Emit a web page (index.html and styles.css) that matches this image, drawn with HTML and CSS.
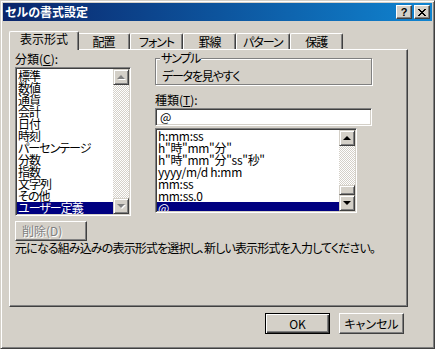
FILE: index.html
```html
<!DOCTYPE html>
<html lang="ja">

<head>
    <meta charset="UTF-8">
    <meta name="viewport" content="width=device-width, initial-scale=1.0">
    <title>セルの書式設定</title>
    <link rel="stylesheet" href="styles.css">
</head>

<body>
    <div class="window">
        <div class="titlebar">
            <span class="title">セルの書式設定</span>
            <div class="caption-btns">
                <button type="button" class="cap-btn help">?</button>
                <button type="button" class="cap-btn close">
                    <svg width="8" height="7" viewBox="0 0 8 7">
                        <path d="M0 0h2v1H0zM6 0h2v1H6zM1 1h2v1H1zM5 1h2v1H5zM2 2h4v1H2zM3 3h2v1H3zM2 4h4v1H2zM1 5h2v1H1zM5 5h2v1H5zM0 6h2v1H0zM6 6h2v1H6z" fill="#000"/>
                    </svg>
                </button>
            </div>
        </div>

        <div class="client">
            <div class="tabs">
                <div class="tab active">表示形式</div>
                <div class="tab">配置</div>
                <div class="tab">フォント</div>
                <div class="tab">罫線</div>
                <div class="tab">パターン</div>
                <div class="tab">保護</div>
            </div>

            <div class="panel">
                <div class="panel-top">
                    <div class="col-left">
                        <div class="label">分類(<u>C</u>):</div>
                        <div class="listbox cat-list">
                            <ul class="items">
                                <li>標準</li>
                                <li>数値</li>
                                <li>通貨</li>
                                <li>会計</li>
                                <li>日付</li>
                                <li>時刻</li>
                                <li>パーセンテージ</li>
                                <li>分数</li>
                                <li>指数</li>
                                <li>文字列</li>
                                <li>その他</li>
                                <li class="selected">ユーザー定義</li>
                            </ul>
                            <div class="scrollbar disabled">
                                <div class="sb-btn"><span class="arrow up"></span></div>
                                <div class="sb-track"></div>
                                <div class="sb-btn"><span class="arrow down"></span></div>
                            </div>
                        </div>
                    </div>

                    <div class="col-right">
                        <div class="group">
                            <span class="group-title">サンプル</span>
                            <div class="sample">データを見やすく</div>
                        </div>
                        <div class="label type-label">種類(<u>T</u>):</div>
                        <div class="textbox">@</div>
                        <div class="listbox type-list">
                            <ul class="items">
                                <li>h:mm:ss</li>
                                <li>h"時"mm"分"</li>
                                <li>h"時"mm"分"ss"秒"</li>
                                <li>yyyy/m/d h:mm</li>
                                <li>mm:ss</li>
                                <li>mm:ss.0</li>
                                <li class="selected">@</li>
                            </ul>
                            <div class="scrollbar">
                                <div class="sb-btn"><span class="arrow up"></span></div>
                                <div class="sb-track">
                                    <div class="sb-thumb"></div>
                                </div>
                                <div class="sb-btn"><span class="arrow down"></span></div>
                            </div>
                        </div>
                    </div>
                </div>

                <button type="button" class="delete-btn" disabled>削除(D)</button>
                <p class="desc">元になる組み込みの表示形式を選択し、新しい表示形式を入力してください。</p>
            </div>

            <div class="dialog-buttons">
                <button type="button" class="btn default">OK</button>
                <button type="button" class="btn">キャンセル</button>
            </div>
        </div>
    </div>
</body>

</html>
```

FILE: styles.css
```css
* {
    box-sizing: border-box;
}

body {
    margin: 0;
    width: 435px;
    height: 349px;
    font-family: "Noto Sans CJK JP", sans-serif;
    font-size: 12px;
    line-height: 12px;
    font-feature-settings: "palt";
    color: #000;
}

button {
    font: inherit;
    color: inherit;
    margin: 0;
}

.window {
    width: 435px;
    height: 349px;
    background-color: #d4d0c8;
    border: 1px solid;
    border-color: #d4d0c8 #404040 #404040 #d4d0c8;
    box-shadow: inset 1px 1px 0 #fff, inset -1px -1px 0 #808080;
    padding: 2px;
    display: flex;
    flex-direction: column;
}

/* title bar */
.titlebar {
    height: 18px;
    background: linear-gradient(to right, #0a246a, #1084d0);
    display: flex;
    align-items: center;
    justify-content: space-between;
    padding: 0 2px 0 2px;
}

.title {
    color: #fff;
    font-weight: bold;
}

.caption-btns {
    display: flex;
    gap: 2px;
}

.cap-btn {
    width: 16px;
    height: 14px;
    padding: 0;
    border: 1px solid;
    border-color: #fff #404040 #404040 #fff;
    box-shadow: inset -1px -1px 0 #808080;
    background-color: #d4d0c8;
    display: flex;
    align-items: center;
    justify-content: center;
}

.help {
    font: bold 11px "Liberation Sans", sans-serif;
}

/* tabs */
.client {
    flex: 1;
    padding: 10px 24px 0 6px;
    display: flex;
    flex-direction: column;
}

.tabs {
    display: flex;
    align-items: flex-end;
    height: 18px;
    padding-left: 2px;
}

.tab {
    height: 16px;
    min-width: 53px;
    padding: 2px 6px 0;
    text-align: center;
    white-space: nowrap;
    letter-spacing: -1px;
    border: 1px solid;
    border-bottom: none;
    border-color: #fff #404040 #404040 #fff;
    box-shadow: inset -1px 0 0 #808080;
    border-radius: 2px 2px 0 0;
    background-color: #d4d0c8;
}

.tab.active {
    height: 19px;
    padding: 1px 10px 0;
    margin: 0 -2px -1px;
    letter-spacing: 0;
    position: relative;
    z-index: 1;
}

.panel {
    height: 258px;
    border: 1px solid;
    border-color: #fff #404040 #404040 #fff;
    box-shadow: inset -1px -1px 0 #808080;
    padding: 2px 0 0 5px;
}

.panel-top {
    display: flex;
    gap: 24px;
}

.col-left {
    width: 116px;
}

.col-right {
    width: 217px;
}

.label {
    height: 15px;
    padding-top: 1px;
}

/* list boxes */
.listbox {
    display: flex;
    background-color: #fff;
    border: 1px solid;
    border-color: #808080 #fff #fff #808080;
    box-shadow: inset 1px 1px 0 #404040, inset -1px -1px 0 #d4d0c8;
    padding: 1px;
}

.cat-list {
    height: 149px;
}

.type-list {
    width: 202px;
    height: 85px;
    margin-top: 2px;
}

.items {
    flex: 1;
    margin: 0;
    padding: 1px 0 0;
    list-style: none;
    overflow: hidden;
    letter-spacing: -1px;
}

.items li {
    height: 12px;
    padding-left: 1px;
    white-space: nowrap;
}

.type-list .items {
    padding-top: 0;
    letter-spacing: -0.3px;
}

.items li.selected {
    background-color: #000080;
    color: #fff;
}

.scrollbar {
    width: 16px;
    display: flex;
    flex-direction: column;
}

.sb-btn,
.sb-thumb {
    height: 16px;
    background-color: #d4d0c8;
    border: 1px solid;
    border-color: #d4d0c8 #404040 #404040 #d4d0c8;
    box-shadow: inset 1px 1px 0 #fff, inset -1px -1px 0 #808080;
    display: flex;
    align-items: center;
    justify-content: center;
}

.sb-track {
    flex: 1;
    display: flex;
    flex-direction: column;
    justify-content: flex-end;
    background: repeating-conic-gradient(#d4d0c8 0 25%, #fff 0 50%) 0 0 / 2px 2px;
}

.sb-thumb {
    height: 10px;
}

.arrow {
    width: 0;
    height: 0;
    border-left: 4px solid transparent;
    border-right: 4px solid transparent;
}

.arrow.up {
    border-bottom: 4px solid #000;
}

.arrow.down {
    border-top: 4px solid #000;
}

.disabled .arrow.up {
    border-bottom-color: #808080;
    filter: drop-shadow(1px 1px 0 #fff);
}

.disabled .arrow.down {
    border-top-color: #808080;
    filter: drop-shadow(1px 1px 0 #fff);
}

/* sample group */
.group {
    margin-top: 6px;
    height: 27px;
    border: 1px solid #808080;
    box-shadow: 1px 1px 0 #fff, inset 1px 1px 0 #fff;
    letter-spacing: -1.2px;
}

.group-title {
    display: block;
    width: fit-content;
    margin: -7px 0 0 4px;
    padding: 0 1px;
    background-color: #d4d0c8;
}

.sample {
    margin: 6px 0 0 6px;
}

.type-label {
    margin-top: 8px;
}

.textbox {
    height: 18px;
    background-color: #fff;
    border: 1px solid;
    border-color: #808080 #fff #fff #808080;
    box-shadow: inset 1px 1px 0 #404040, inset -1px -1px 0 #d4d0c8;
    padding: 2px 0 0 4px;
}

/* bottom of panel */
.delete-btn {
    display: block;
    margin-top: 5px;
    width: 72px;
    height: 20px;
    padding: 0 0 0 6px;
    text-align: left;
    background-color: #d4d0c8;
    border: 1px solid;
    border-color: #fff #404040 #404040 #fff;
    box-shadow: inset -1px -1px 0 #808080;
    color: #808080;
    text-shadow: 1px 1px 0 #fff;
}

.desc {
    margin: 1px 0 0;
    white-space: nowrap;
    letter-spacing: -0.85px;
}

/* OK / cancel */
.dialog-buttons {
    display: flex;
    justify-content: flex-end;
    gap: 9px;
    margin-top: 6px;
    padding-right: 4px;
}

.btn {
    width: 65px;
    height: 21px;
    padding: 0;
    background-color: #d4d0c8;
    border: 1px solid;
    border-color: #fff #404040 #404040 #fff;
    box-shadow: inset -1px -1px 0 #808080;
}

.btn.default {
    border-color: #000;
    box-shadow: inset 1px 1px 0 #fff, inset -1px -1px 0 #404040, inset -2px -2px 0 #808080;
}
```
